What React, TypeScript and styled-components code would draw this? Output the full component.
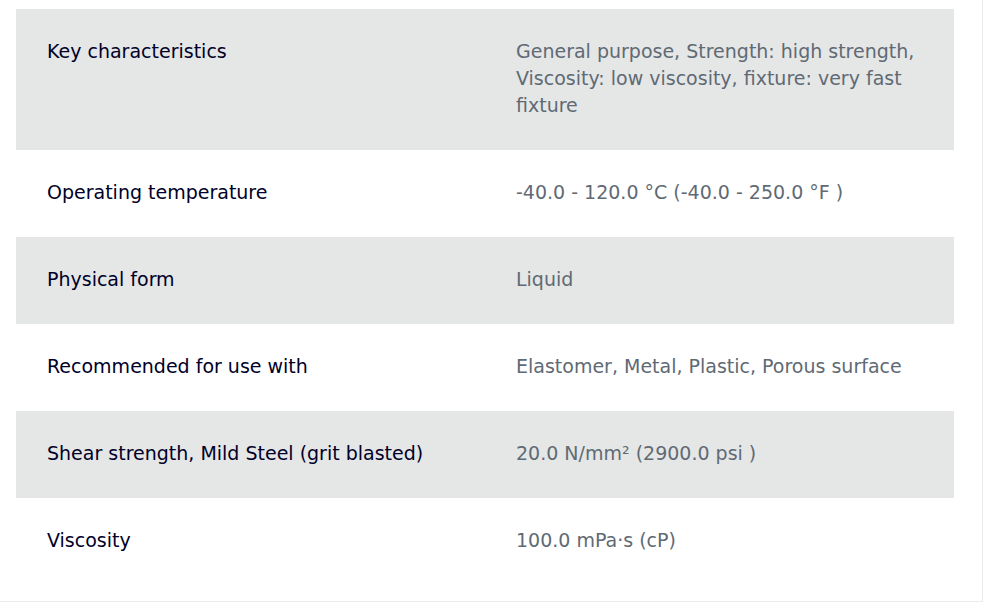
import React from "react";
import styled, { createGlobalStyle } from "styled-components";

const Global = createGlobalStyle`
  html, body { margin: 0; padding: 0; background: #ffffff; }
  body { font-family: "DejaVu Sans", "Open Sans", sans-serif; }
`;

const Panel = styled.section`
  box-sizing: border-box;
  width: 983px;
  height: 602px;
  padding: 9px 28px 16px 16px;
  border-right: 1px solid #ececec;
  border-bottom: 1px solid #ececec;
  background: #ffffff;
`;

const Table = styled.div`
  display: flex;
  flex-direction: column;
`;

const Row = styled.div<{ $shaded: boolean }>`
  display: grid;
  grid-template-columns: 1fr 1fr;
  background: ${(p) => (p.$shaded ? "#e5e6e6" : "#ffffff")};
`;

const Cell = styled.div<{ $value?: boolean }>`
  padding: 29px 29px 31px 31px;
  font-family: "DejaVu Sans", "Open Sans", sans-serif;
  font-size: 19px;
  line-height: 27px;
  color: ${(p) => (p.$value ? "#5f6a74" : "#000028")};
`;

const rows: [string, string][] = [
  ["Key characteristics", "General purpose, Strength: high strength, Viscosity: low viscosity, fixture: very fast fixture"],
  ["Operating temperature", "-40.0 - 120.0 °C (-40.0 - 250.0 °F )"],
  ["Physical form", "Liquid"],
  ["Recommended for use with", "Elastomer, Metal, Plastic, Porous surface"],
  ["Shear strength, Mild Steel (grit blasted)", "20.0 N/mm² (2900.0 psi )"],
  ["Viscosity", "100.0 mPa·s (cP)"],
];

export default function App() {
  return (
    <>
      <Global />
      <Panel>
        <Table>
          {rows.map(([k, v], i) => (
            <Row key={k} $shaded={i % 2 === 0}>
              <Cell>{k}</Cell>
              <Cell $value>{v}</Cell>
            </Row>
          ))}
        </Table>
      </Panel>
    </>
  );
}
